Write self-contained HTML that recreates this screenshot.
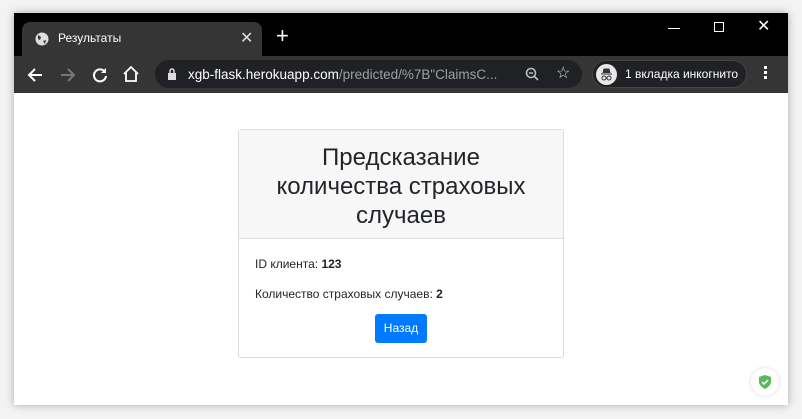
<!DOCTYPE html>
<html><head><meta charset="utf-8"><style>
*{margin:0;padding:0;box-sizing:border-box}
body{width:802px;height:419px;background:#f3f3f3;font-family:"Liberation Sans",sans-serif;position:relative;overflow:hidden}
.win{position:absolute;left:14px;top:13px;width:774px;height:392px;background:#fff;box-shadow:0 0 8px rgba(0,0,0,.3)}
.title{position:absolute;left:0;top:0;width:774px;height:43px;background:#000}
.tab{position:absolute;left:8px;top:9px;width:240px;height:34px;background:#353535;border-radius:8px 8px 0 0}
.tab .t{position:absolute;left:36px;top:9px;color:#fff;font-size:12px}
.tab .x{position:absolute;left:218px;top:6px;color:#ddd;font-size:16px}
.plus{position:absolute;left:262px;top:12px;color:#fff;font-size:22px;line-height:22px}
.tool{position:absolute;left:0;top:43px;width:774px;height:37px;background:#353535}
.url{position:absolute;left:141px;top:4px;width:427px;height:28px;background:#202124;border-radius:14px}
.url .u{position:absolute;left:33px;top:7px;font-size:13.5px;color:#fff;white-space:nowrap}
.url .u span{color:#9aa0a6}
.inc{position:absolute;left:578px;top:4px;width:155px;height:28px;background:#202124;border-radius:14px;border:1px solid #444}
.inc .t{position:absolute;left:32px;top:6px;color:#fff;font-size:12px;white-space:nowrap}
.inc .c{position:absolute;left:3px;top:3px;width:21px;height:21px;border-radius:50%;background:#e8e8e8}
.card{position:absolute;left:224px;top:116px;width:326px;height:229px;border:1px solid #dcdcdc;border-radius:3px;background:#fff}
.hd{height:109px;background:#f7f7f7;border-bottom:1px solid #dcdcdc;text-align:center;font-size:24px;line-height:29px;color:#212529;padding-top:13px}
.bd{padding:18px 16px;font-size:12px;color:#212529}
.bd p{height:30px}
.btn{position:absolute;left:136px;top:184px;width:52px;height:29px;background:#007bff;color:#fff;border-radius:3px;font-size:12px;text-align:center;line-height:29px}
</style></head><body>
<div class="win">
<div class="title">
<div class="tab">
<svg style="position:absolute;left:13px;top:10px" width="14" height="14" viewBox="0 0 14 14"><circle cx="7" cy="7" r="6.5" fill="#ddd"/><path d="M3 3 L6 5 L5 8 L3 7Z M8 9 L11 8 L10 12Z" fill="#353535"/></svg>
<div class="t">Результаты</div><div class="x">✕</div></div>
<div class="plus">+</div>
<div style="position:absolute;left:654px;top:15px;width:12px;height:1px;background:#fff"></div>
<div style="position:absolute;left:700px;top:9px;width:10px;height:10px;border:1px solid #fff"></div>
<div style="position:absolute;left:743px;top:3px;color:#fff;font-size:16px">✕</div>
</div>
<div class="tool">
<svg style="position:absolute;left:12px;top:10px" width="18" height="18" viewBox="0 0 18 18" fill="none" stroke="#fff" stroke-width="2"><path d="M16 9H3M9 3L3 9l6 6"/></svg>
<svg style="position:absolute;left:45px;top:10px" width="18" height="18" viewBox="0 0 18 18" fill="none" stroke="#777" stroke-width="2"><path d="M2 9h13M9 3l6 6-6 6"/></svg>
<svg style="position:absolute;left:77px;top:10px" width="18" height="18" viewBox="0 0 18 18" fill="none" stroke="#fff" stroke-width="2"><path d="M14 6A6 6 0 1 0 15 10"/><path d="M15 2v5h-5" fill="#fff" stroke="none"/></svg>
<svg style="position:absolute;left:108px;top:9px" width="18" height="18" viewBox="0 0 18 18" fill="none" stroke="#fff" stroke-width="1.8"><path d="M2 9L9 2l7 7M4 7v9h10V7"/></svg>
<div class="url"><svg style="position:absolute;left:12px;top:8px" width="10" height="12" viewBox="0 0 10 12"><rect x="1" y="5" width="8" height="7" fill="#ddd"/><path d="M3 5V3a2 2 0 0 1 4 0v2" stroke="#ddd" fill="none" stroke-width="1.5"/></svg>
<div class="u">xgb-flask.herokuapp.com<span>/predicted/%7B"ClaimsC...</span></div>
<svg style="position:absolute;left:370px;top:7px" width="14" height="14" viewBox="0 0 14 14" fill="none" stroke="#bbb" stroke-width="1.6"><circle cx="6" cy="6" r="4.5"/><path d="M9.5 9.5L13 13M4 6h4"/></svg>
<div style="position:absolute;left:401px;top:3px;color:#ddd;font-size:16px">☆</div></div>
<div class="inc"><div class="c"><svg width="21" height="21" viewBox="0 0 21 21"><path d="M5 10h11M7 9l1-4h5l1 4" stroke="#333" fill="#333" stroke-width="1"/><circle cx="8" cy="14" r="2" stroke="#333" fill="none"/><circle cx="13" cy="14" r="2" stroke="#333" fill="none"/></svg></div><div class="t">1 вкладка инкогнито</div></div>
<div style="position:absolute;left:750px;top:10px;width:3px;height:3px;background:#fff;box-shadow:0 5px #fff,0 10px #fff"></div>
</div>
<div class="card">
<div class="hd">Предсказание<br>количества страховых<br>случаев</div>
<div class="bd"><p>ID клиента: <b>123</b></p><p>Количество страховых случаев: <b>2</b></p></div>
<div class="btn">Назад</div>
</div>
<div style="position:absolute;left:737px;top:355px;width:28px;height:28px;border-radius:50%;background:#fff;box-shadow:0 0 4px rgba(0,0,0,.15)"><svg style="position:absolute;left:7px;top:6px" width="14" height="16" viewBox="0 0 14 16"><path d="M7 1L13 3V8C13 12 7 15 7 15S1 12 1 8V3Z" fill="#5cb85c"/><path d="M4 8l2 2 4-4" stroke="#fff" stroke-width="1.5" fill="none"/></svg></div>
</div>
</body></html>
